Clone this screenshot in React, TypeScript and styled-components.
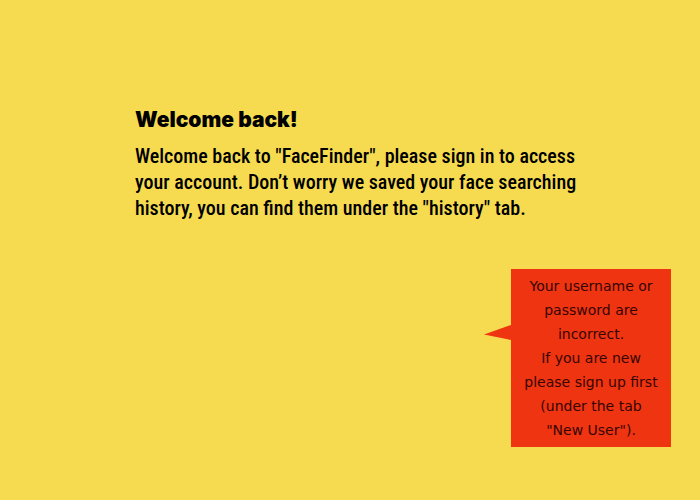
import React from "react";
import styled, { createGlobalStyle } from "styled-components";

const GlobalStyle = createGlobalStyle`
  *, *::before { box-sizing: border-box; }
  body { margin: 0; background: #f6db50; color: #000; }
`;

const Page = styled.main`
  display: flex;
  flex-direction: column;
  min-height: 100vh;
  padding: 106px 29px 52px 135px;
`;

const Welcome = styled.section`
  font-family: "Roboto Condensed", "Liberation Sans Narrow", "Arial Narrow", Roboto, sans-serif;
`;

const Title = styled.h1`
  margin: 0;
  font-family: Inter, sans-serif;
  font-size: 21px;
  font-weight: 900;
  line-height: 28px;
`;

const Message = styled.p`
  margin: 9px 0 0;
  font-size: 20px;
  font-weight: 500;
  line-height: 26px;
  white-space: pre-line;
`;

const Alert = styled.aside`
  position: relative;
  align-self: flex-end;
  min-width: 160px;
  margin-top: 48px;
  padding: 5px 10px;
  background: #ef3412;
  color: #360500;
  font-family: "DejaVu Sans", Verdana, sans-serif;
  font-size: 14px;
  line-height: 24px;
  text-align: center;

  p { margin: 0; white-space: pre-line; }
`;

const Pointer = styled.svg`
  position: absolute;
  right: 100%;
  top: 56px;
  width: 27px;
  height: 15px;
  fill: #ef3412;
`;

export default function App() {
  return (
    <>
      <GlobalStyle />
      <Page>
        <Welcome>
          <Title>Welcome back!</Title>
          <Message>
            {'Welcome back to "FaceFinder", please sign in to access\nyour account. Don’t worry we saved your face searching\nhistory, you can find them under the "history" tab.'}
          </Message>
        </Welcome>
        <Alert role="alert">
          <Pointer viewBox="0 0 27 15" aria-hidden="true">
            <path d="M0 9.5 27 0v15Z" />
          </Pointer>
          <p>{"Your username or\npassword are\nincorrect."}</p>
          <p>{'If you are new\nplease sign up first\n(under the tab\n"New User").'}</p>
        </Alert>
      </Page>
    </>
  );
}
